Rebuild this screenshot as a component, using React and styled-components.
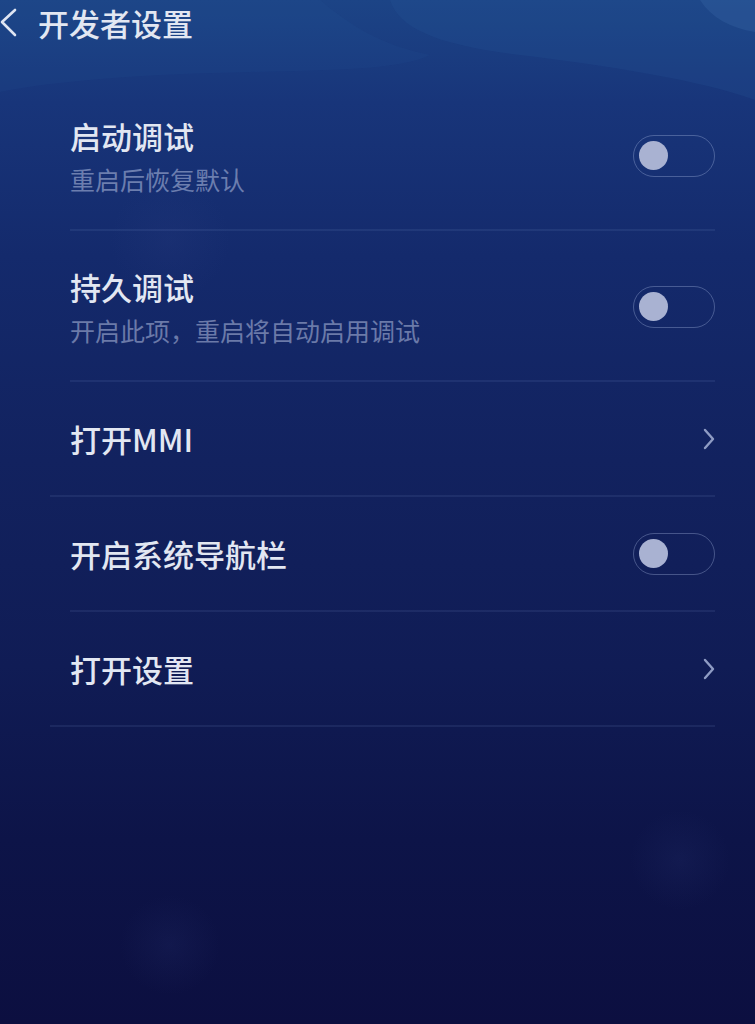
import React, { useState } from "react";
import styled, { createGlobalStyle } from "styled-components";

const GlobalStyle = createGlobalStyle`
  html, body {
    margin: 0;
    padding: 0;
    background: #0c0f40;
  }
  * { box-sizing: border-box; }
`;

const items = [
  { id: 1, title: "启动调试", sub: "重启后恢复默认", type: "toggle" },
  { id: 2, title: "持久调试", sub: "开启此项，重启将自动启用调试", type: "toggle" },
  { id: 3, title: "打开MMI", type: "link" },
  { id: 4, title: "开启系统导航栏", type: "toggle" },
  { id: 5, title: "打开设置", type: "link" },
];

const Waves = () => (
  <WaveLayer width="755" height="1024" viewBox="0 0 755 1024" preserveAspectRatio="none">
    <defs>
      <radialGradient id="glow" cx="0.5" cy="0.5" r="0.5">
        <stop offset="0" stopColor="#3a4a90" stopOpacity="0.12" />
        <stop offset="1" stopColor="#3a4a90" stopOpacity="0" />
      </radialGradient>
    </defs>
    <path d="M0 0 H390 C400 30 440 45 520 55 C610 66 700 80 755 100 V0 Z" fill="#2a5a9c" opacity="0.2" />
    <path d="M0 0 H320 C350 25 380 45 430 55 C400 70 330 70 250 72 C150 74 60 80 0 92 Z" fill="#2a5a9c" opacity="0.12" />
    <path d="M700 0 C712 18 730 28 755 32 V0 Z" fill="#3a6aa8" opacity="0.3" />
    <circle cx="170" cy="240" r="60" fill="url(#glow)" />
    <circle cx="680" cy="860" r="50" fill="url(#glow)" />
    <circle cx="170" cy="945" r="50" fill="url(#glow)" />
  </WaveLayer>
);

const BackIcon = () => (
  <svg width="17" height="30" viewBox="0 0 17 30">
    <path d="M15 2 L2 14 L15 27" fill="none" stroke="#dfe5f2" strokeWidth="2.6" strokeLinecap="round" strokeLinejoin="round" />
  </svg>
);

const Chevron = () => (
  <svg width="12" height="22" viewBox="0 0 12 22">
    <path d="M2 2 L10 11 L2 20" fill="none" stroke="#8f9cc4" strokeWidth="2.4" strokeLinecap="round" strokeLinejoin="round" />
  </svg>
);

const App = () => {
  const [state, setState] = useState({ 1: false, 2: false, 4: false });

  return (
    <>
      <GlobalStyle />
      <Screen>
        <Waves />
        <Header>
          <BackButton>
            <BackIcon />
          </BackButton>
          <Title>开发者设置</Title>
        </Header>
        <List>
          {items.map((el) => (
            <Row key={el.id} $tall={!!el.sub} $wide={el.type === "link"}>
              <TextBlock>
                <RowTitle>{el.title}</RowTitle>
                {el.sub && <RowSub>{el.sub}</RowSub>}
              </TextBlock>
              {el.type === "toggle" ? (
                <Switch
                  $on={state[el.id]}
                  onClick={() => setState({ ...state, [el.id]: !state[el.id] })}
                >
                  <Knob $on={state[el.id]} />
                </Switch>
              ) : (
                <Chevron />
              )}
            </Row>
          ))}
        </List>
      </Screen>
    </>
  );
};

export default App;

const Screen = styled.div`
  position: relative;
  width: 755px;
  height: 1024px;
  overflow: hidden;
  background: linear-gradient(
    180deg,
    #1c4486 0%,
    #18357a 10%,
    #142a6c 25%,
    #12225f 45%,
    #101c55 65%,
    #0d1448 82%,
    #0c0f40 100%
  );
  font-family: "Noto Sans CJK SC", "Noto Sans", sans-serif;
`;

const WaveLayer = styled.svg`
  position: absolute;
  left: 0;
  top: 0;
  z-index: 0;
`;

const Header = styled.div`
  position: relative;
  z-index: 1;
  display: flex;
  align-items: center;
  height: 46px;
`;

const BackButton = styled.div`
  display: flex;
  align-items: center;
  width: 38px;
  height: 46px;
`;

const Title = styled.div`
  font-size: 31px;
  font-weight: 500;
  color: #e2e7f2;
  line-height: 46px;
`;

const List = styled.div`
  position: relative;
  z-index: 1;
  margin-top: 34px;
  padding-right: 40px;
`;

const Row = styled.div`
  display: flex;
  align-items: center;
  justify-content: space-between;
  height: ${(p) => (p.$tall ? "151px" : "115px")};
  margin-left: 70px;
  padding-top: ${(p) => (p.$tall ? "2px" : "0")};
  border-bottom: 2px solid rgba(140, 160, 220, 0.11);

  ${(p) =>
    p.$wide &&
    `
    margin-left: 50px;
    padding-left: 20px;
  `}
`;

const TextBlock = styled.div`
  display: flex;
  flex-direction: column;
  gap: 10px;
`;

const RowTitle = styled.div`
  font-size: 31px;
  font-weight: 500;
  line-height: 36px;
  color: #e2e7f2;
`;

const RowSub = styled.div`
  font-size: 25px;
  font-weight: 400;
  line-height: 30px;
  color: rgba(195, 205, 235, 0.5);
`;

const Switch = styled.div`
  position: relative;
  width: 82px;
  height: 42px;
  border-radius: 21px;
  border: 1.5px solid rgba(170, 185, 225, 0.35);
  background: ${(p) => (p.$on ? "#3d6fd6" : "transparent")};
  cursor: pointer;
  flex-shrink: 0;
`;

const Knob = styled.div`
  position: absolute;
  top: 5px;
  left: ${(p) => (p.$on ? "45px" : "5px")};
  width: 29px;
  height: 29px;
  border-radius: 50%;
  background: #a9b2d2;
`;
